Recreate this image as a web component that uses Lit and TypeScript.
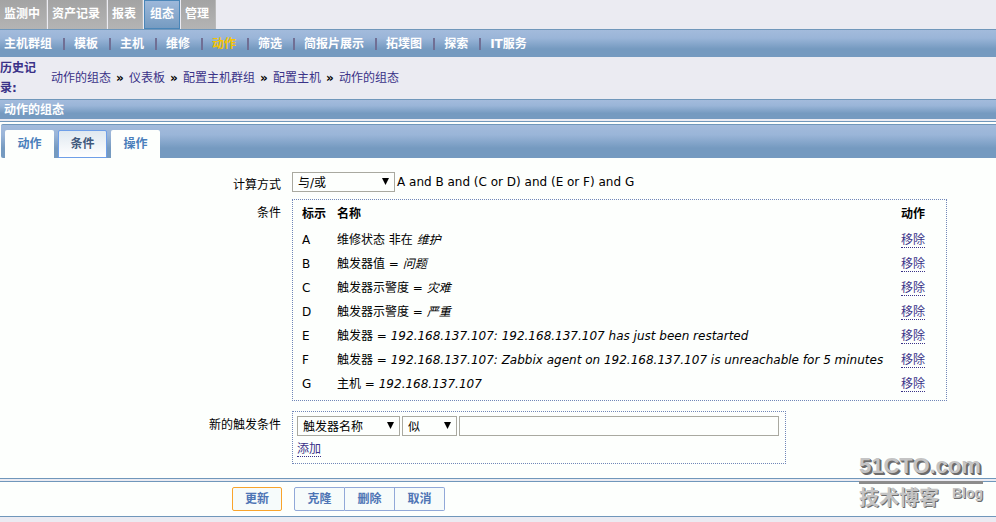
import { LitElement, html, css } from "lit";
import { customElement, state } from "lit/decorators.js";

interface Condition {
  id: string;
  name: string;
  op: string;
  value: string;
}

const MAIN_MENU = ["监测中", "资产记录", "报表", "组态", "管理"];
const SUB_MENU = ["主机群组", "模板", "主机", "维修", "动作", "筛选", "简报片展示", "拓墣图", "探索", "IT服务"];
const HISTORY = ["动作的组态", "仪表板", "配置主机群组", "配置主机", "动作的组态"];
const TABS = ["动作", "条件", "操作"];
const CONDITIONS: Condition[] = [
  { id: "A", name: "维修状态", op: "非在", value: "维护" },
  { id: "B", name: "触发器值", op: "=", value: "问题" },
  { id: "C", name: "触发器示警度", op: "=", value: "灾难" },
  { id: "D", name: "触发器示警度", op: "=", value: "严重" },
  { id: "E", name: "触发器", op: "=", value: "192.168.137.107: 192.168.137.107 has just been restarted" },
  { id: "F", name: "触发器", op: "=", value: "192.168.137.107: Zabbix agent on 192.168.137.107 is unreachable for 5 minutes" },
  { id: "G", name: "主机", op: "=", value: "192.168.137.107" },
];

@customElement("app-root")
export class AppRoot extends LitElement {
  @state() private tab = "条件";

  static styles = css`
    :host {
      display: block;
      position: relative;
      min-height: 100vh;
      background: #ebebf2;
      color: #000;
      font: 12px/20px "DejaVu Sans", "Noto Sans CJK SC", sans-serif;
    }
    * { box-sizing: border-box; }
    a { color: #3a3288; text-decoration: none; }
    button, input, select { font: inherit; margin: 0; }
    .main-menu { display: flex; gap: 1px; }
    .main-menu a {
      height: 29px;
      padding: 4px 6px 0 4px;
      border-right: 1px solid #b9b9b9;
      background: linear-gradient(#a3a3a3, #b4b4b4);
      color: #fff;
      font-weight: bold;
    }
    .main-menu a.on {
      padding: 3px 5px 0;
      border: 1px solid #4a86b8;
      background: linear-gradient(#9db8da, #759bc1);
    }
    .bar { background: linear-gradient(#a3bbdc, #9ab5d8 30%, #759ac0 70%, #759ac0); }
    .sub-menu {
      display: flex;
      height: 28px;
      padding: 4px 4px 0;
      border-top: 1px solid #7097bb;
    }
    .sub-menu a { color: #fff; font-weight: bold; }
    .sub-menu a.on { color: #f5c400; }
    .sub-menu a + a::before {
      content: "";
      display: inline-block;
      width: 2px;
      height: 12px;
      margin: 0 9px 0 11px;
      background: #706f94;
      vertical-align: -2px;
    }
    .history { display: flex; align-items: center; height: 42px; color: #3a3288; }
    .history strong { width: 39px; margin-right: 12px; }
    .history a + a::before {
      content: "»";
      display: inline-block;
      width: 8px;
      margin: 0 5px;
      color: #000;
      font-weight: bold;
    }
    h1 {
      height: 20px;
      margin: 0;
      padding-left: 4px;
      border-top: 1px solid #7097bb;
      color: #fff;
      font-size: 12px;
      line-height: 20px;
    }
    .panel {
      margin-top: 2px;
      padding: 2px 0 14px;
      border-top: 1px solid #7097bb;
      border-bottom: 1px solid #7097bb;
      background: #fdfffd;
    }
    .tabs {
      display: flex;
      gap: 4px;
      height: 34px;
      margin-left: 1px;
      padding: 5px 4px 0;
      border-top: 1px solid #7097bb;
      border-radius: 2px 0 0 2px;
    }
    .tabs button {
      width: 49px;
      padding: 0;
      border: 0;
      border-radius: 2px 2px 0 0;
      background: #fdfffd;
      color: #4a7ebb;
      font-weight: bold;
    }
    .tabs button.on {
      border: 1px solid #6f9fe8;
      background: linear-gradient(#dfe8f0, #fff);
      color: #40597c;
    }
    .form {
      display: grid;
      grid-template-columns: 281px 1fr;
      column-gap: 11px;
      padding-top: 14px;
    }
    .label { padding-top: 3px; text-align: right; }
    .field { display: flex; align-items: center; gap: 2px; height: 20px; }
    .select { display: flex; position: relative; }
    .select svg { position: absolute; top: 6px; right: 6px; pointer-events: none; }
    select, input {
      height: 20px;
      border: 1px solid #a9a9a0;
      border-radius: 0;
      background: #fdfffd;
      color: #000;
    }
    select { appearance: none; padding: 1px 5px 0; line-height: 18px; }
    .wide { width: 103px; }
    .narrow { width: 55px; }
    input { width: 320px; padding: 0 4px; }
    .box { justify-self: start; border: 1px dotted #7086b8; }
    .conditions { width: 655px; margin-top: 4px; padding: 0 0 4px 9px; }
    .conditions-label { margin-top: 5px; }
    .new-label { margin-top: 11px; }
    table { width: 100%; border-collapse: collapse; }
    td, th { height: 24px; padding: 0; text-align: left; line-height: 20px; white-space: nowrap; }
    th { height: 28px; }
    .col-id { width: 35px; }
    .col-act { width: 45px; }
    .link { display: inline-block; border-bottom: 1px dotted #3a3288; line-height: 14px; }
    .new { width: 494px; height: 53px; margin-top: 10px; padding: 4px; }
    .new .link { margin-top: 6px; }
    .footer {
      display: flex;
      height: 36px;
      margin-top: 2px;
      padding: 5px 0 0 232px;
      border-top: 1px solid #7097bb;
      border-bottom: 1px solid #7097bb;
      background: #fdfffd;
    }
    .footer button {
      width: 50px;
      height: 24px;
      padding: 0;
      border: 1px solid #91a8d8;
      border-left-width: 0;
      background: #f6fbfb;
      color: #4f75b5;
      font-weight: bold;
    }
    .footer .update {
      margin-right: 12px;
      border: 1px solid #f9a42c;
      border-radius: 2px;
    }
    .footer .clone { width: 51px; border-left-width: 1px; border-radius: 2px 0 0 2px; }
    .footer .cancel { border-radius: 0 2px 2px 0; }
    .mark {
      position: absolute;
      right: 13px;
      bottom: 10px;
      width: 124px;
      color: #c4c4c4;
      font-weight: bold;
      text-shadow: 1px 1px #6c6c6c;
      pointer-events: none;
    }
    .mark-top {
      border-bottom: 3px solid #8c8c8c;
      font: bold 22px/30px "Liberation Sans", sans-serif;
      text-shadow: 1px 1px #6c6c6c, 2px 2px #6c6c6c;
    }
    .mark-bottom { display: flex; justify-content: space-between; font-size: 20px; line-height: 28px; }
    .mark-bottom small { font: bold 14px/18px "Liberation Sans", sans-serif; }
  `;

  private select(label: string, value: string, size: string) {
    return html`<span class="select">
      <select class=${size} aria-label=${label}><option>${value}</option></select>
      <svg width="7" height="7" viewBox="0 0 7 7" aria-hidden="true"><path d="M0 0h7L3.5 7z" /></svg>
    </span>`;
  }

  private stop(e: Event) {
    e.preventDefault();
  }

  render() {
    return html`
      <nav class="main-menu">
        ${MAIN_MENU.map((m) => html`<a href="#" class=${m === "组态" ? "on" : ""}>${m}</a>`)}
      </nav>
      <nav class="sub-menu bar">
        ${SUB_MENU.map((m) => html`<a href="#" class=${m === "动作" ? "on" : ""}>${m}</a>`)}
      </nav>
      <nav class="history">
        <strong>历史记录:</strong>
        ${HISTORY.map((h) => html`<a href="#">${h}</a>`)}
      </nav>
      <h1 class="bar">动作的组态</h1>
      <form @submit=${this.stop}>
        <div class="panel">
          <div class="tabs bar">
            ${TABS.map(
              (t) => html`<button type="button" class=${t === this.tab ? "on" : ""} @click=${() => (this.tab = t)}>${t}</button>`
            )}
          </div>
          <div class="form">
            <div class="label">计算方式</div>
            <div class="field">${this.select("计算方式", "与/或", "wide")}<span>A and B and (C or D) and (E or F) and G</span></div>
            <div class="label conditions-label">条件</div>
            <div class="box conditions">
              <table>
                <thead>
                  <tr><th class="col-id">标示</th><th>名称</th><th class="col-act">动作</th></tr>
                </thead>
                <tbody>
                  ${CONDITIONS.map(
                    (c) => html`<tr>
                      <td>${c.id}</td>
                      <td>${c.name} ${c.op} <em>${c.value}</em></td>
                      <td><a class="link" href="#">移除</a></td>
                    </tr>`
                  )}
                </tbody>
              </table>
            </div>
            <label class="label new-label" for="value">新的触发条件</label>
            <div class="box new">
              <div class="field">
                ${this.select("条件类型", "触发器名称", "wide")}${this.select("运算符", "似", "narrow")}<input id="value" type="text" />
              </div>
              <a class="link" href="#">添加</a>
            </div>
          </div>
        </div>
        <div class="footer">
          <button class="update">更新</button>
          <button type="button" class="clone">克隆</button>
          <button type="button">删除</button>
          <button type="button" class="cancel">取消</button>
        </div>
      </form>
      <div class="mark">
        <div class="mark-top">51CTO.com</div>
        <div class="mark-bottom">技术博客<small>Blog</small></div>
      </div>
    `;
  }
}
